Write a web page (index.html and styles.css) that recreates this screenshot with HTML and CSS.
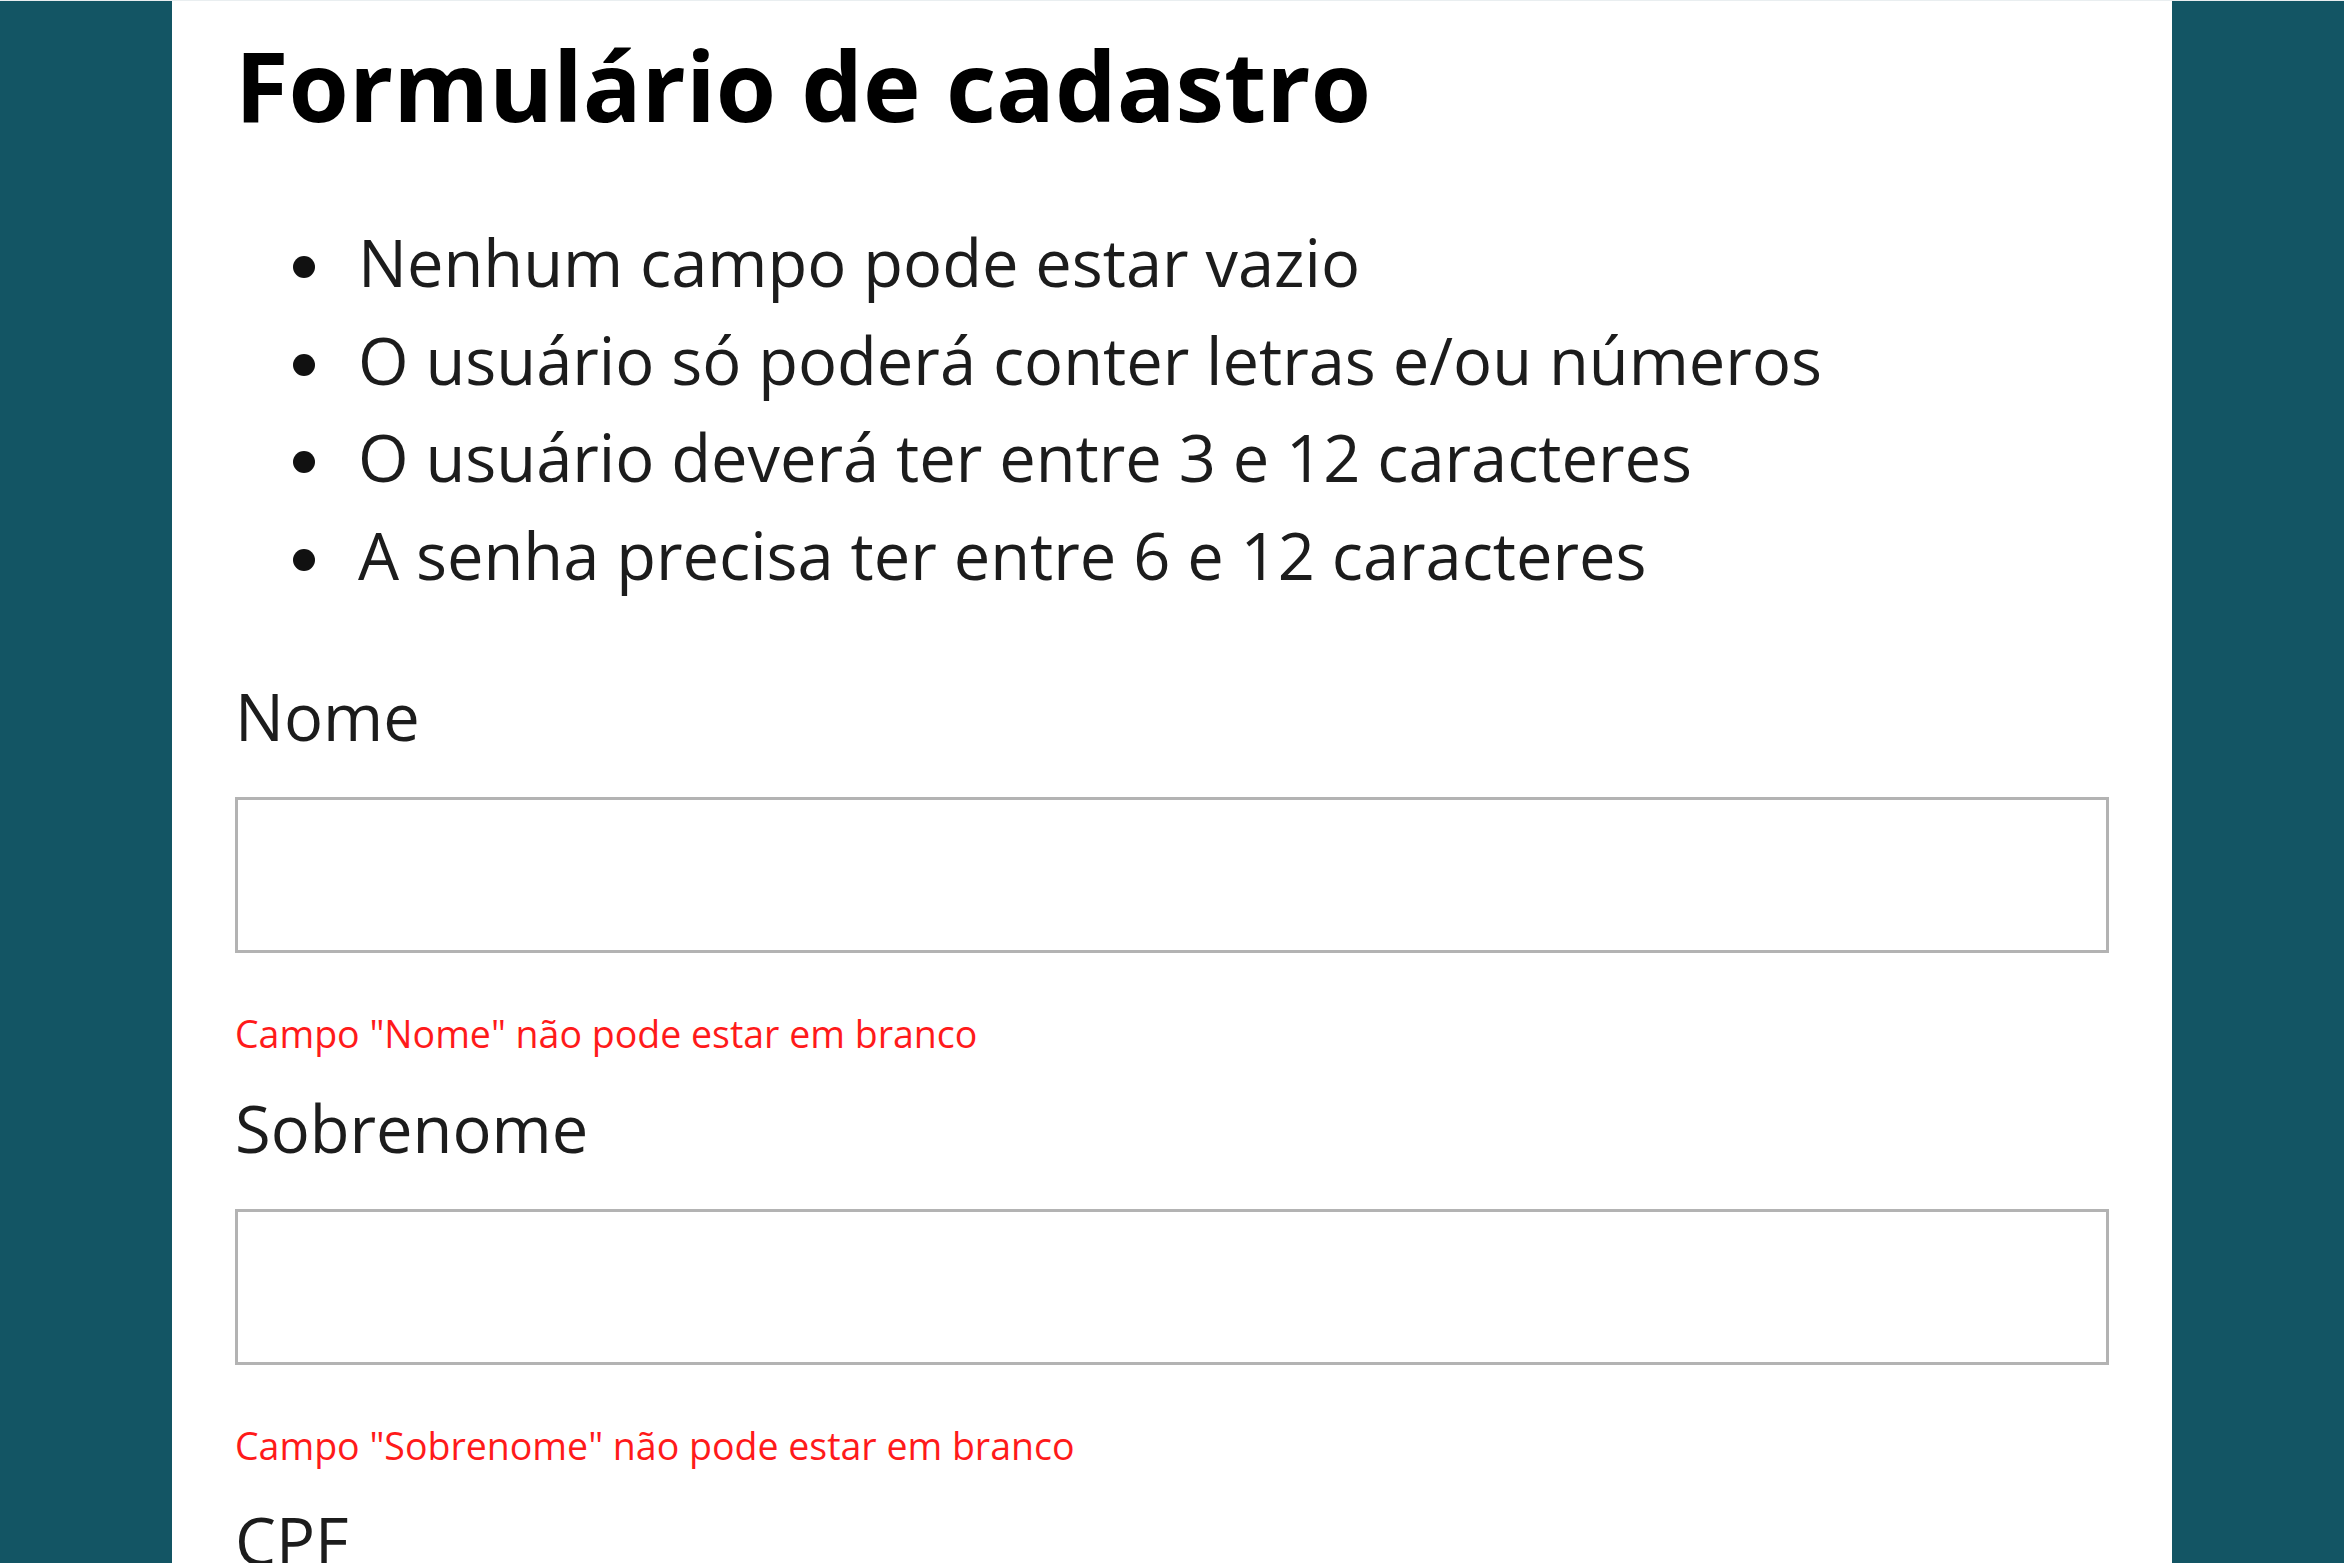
FILE: index.html
```html
<!DOCTYPE html>
<html lang="pt-BR">
<head>
<meta charset="utf-8">
<title>Formulário de cadastro</title>
<link rel="stylesheet" href="styles.css">
</head>
<body>
<main class="page">
  <h1 class="title">Formulário de cadastro</h1>
  <ul class="rules">
    <li class="rule">Nenhum campo pode estar vazio</li>
    <li class="rule">O usuário só poderá conter letras e/ou números</li>
    <li class="rule">O usuário deverá ter entre 3 e 12 caracteres</li>
    <li class="rule">A senha precisa ter entre 6 e 12 caracteres</li>
  </ul>
  <form class="form">
    <div class="field">
      <label class="label" for="nome">Nome</label>
      <input class="input" id="nome" type="text">
      <p class="error">Campo "Nome" não pode estar em branco</p>
    </div>
    <div class="field">
      <label class="label" for="sobrenome">Sobrenome</label>
      <input class="input" id="sobrenome" type="text">
      <p class="error">Campo "Sobrenome" não pode estar em branco</p>
    </div>
    <div class="field">
      <label class="label" for="cpf">CPF</label>
      <input class="input" id="cpf" type="text">
    </div>
  </form>
</main>
</body>
</html>
```
FILE: styles.css
```css
html, body {
  margin: 0;
  padding: 0;
}

body {
  background: #135564;
  font-family: "Open Sans", "Noto Sans", sans-serif;
  height: 1563px;
  overflow: hidden;
  border-top: 1px solid #e9eef0;
  box-sizing: border-box;
}

.page {
  width: 2000px;
  margin: 0 auto;
  background: #ffffff;
  padding: 18px 63px 0;
  box-sizing: border-box;
  min-height: 1600px;
}

.title {
  margin: 0 0 64px;
  font-size: 97.5px;
  line-height: 131px;
  font-weight: 700;
  color: #000;
}

.rules {
  margin: 0 0 64px;
  padding-left: 58px;
  list-style: none;
  font-size: 65px;
  line-height: 97.5px;
  color: #1c1c1c;
}

.rule {
  display: flex;
  align-items: flex-start;
}

.rule::before {
  content: "";
  flex: none;
  width: 22px;
  height: 22px;
  margin-top: 42px;
  margin-right: 43px;
  border-radius: 50%;
  background: #111;
}

.form {
  display: flex;
  flex-direction: column;
}

.field {
  display: flex;
  flex-direction: column;
}

.label {
  font-size: 65px;
  line-height: 96px;
  color: #1c1c1c;
}

.input {
  margin-top: 33px;
  width: 100%;
  height: 156px;
  box-sizing: border-box;
  border: 3px solid #b3b3b3;
  background: #fff;
  font-family: inherit;
  font-size: 48px;
  outline: none;
}

.error {
  margin: 54px 0 19px;
  font-size: 37.5px;
  line-height: 54px;
  color: #ff1a1a;
}
```
